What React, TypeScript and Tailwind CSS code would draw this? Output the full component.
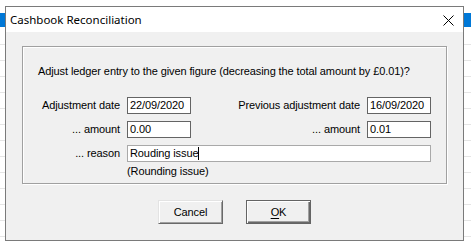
const rows = Array.from({ length: 13 });

function Edit({ value, width, light, caret }: { value: string; width: string; light?: boolean; caret?: boolean }) {
  return (
    <div
      className={`flex h-[17px] items-center bg-white pl-[2px] ${width} border ${
        light ? "border-[#a9a9a9]" : "border-[#646464]"
      }`}
    >
      <span>{value}</span>
      {caret && <span className="h-[13px] w-px bg-black" />}
    </div>
  );
}

export default function App() {
  return (
    <div className="relative h-[246px] w-[471px] overflow-hidden bg-white">
      {/* list behind the dialog */}
      <div className="flex flex-col">
        <div className="h-[13px]" />
        <div className="h-[14px] bg-[#0078d7]" />
        <div className="h-[17px]" />
        {rows.map((_, i) => (
          <div key={i} className="h-[16px] border-t border-[#e5e5e5]" />
        ))}
      </div>

      {/* dialog window */}
      <div
        className="absolute left-[5px] top-[6px] flex h-[235px] w-[459px] flex-col border border-[#7a7a7a] bg-[#f0f0f0] text-[11px] tracking-[-0.1px] text-black"
        style={{ fontFamily: '"Liberation Sans", Arial, sans-serif' }}
      >
        <div className="flex h-[25px] items-center justify-between bg-white pl-[4px] pr-[9px]">
          <span className="text-[11.5px] tracking-normal" style={{ fontFamily: '"Noto Sans", sans-serif' }}>
            Cashbook Reconciliation
          </span>
          <svg width="11" height="11" viewBox="0 0 11 11" className="mt-[1px]">
            <path d="M0.5 0.5 L10.5 10.5 M10.5 0.5 L0.5 10.5" stroke="#000" strokeWidth="1" />
          </svg>
        </div>

        <div className="flex flex-1 flex-col px-[16px] pt-[14px]">
          <div className="flex h-[138px] flex-col border border-[#a0a0a0] pl-[15px] pr-[15px] pt-[18px] shadow-[inset_1px_1px_0_#fff,1px_1px_0_#fff]">
            <div className="leading-[13px]">
              Adjust ledger entry to the given figure (decreasing the total amount by £0.01)?
            </div>

            <div className="mt-[19px] flex flex-col gap-[7px]">
              <div className="flex items-center">
                <div className="w-[82px] text-right">Adjustment date</div>
                <div className="ml-[7px]">
                  <Edit value="22/09/2020" width="w-[64px]" />
                </div>
                <div className="flex-1 text-right">Previous adjustment date</div>
                <div className="ml-[7px]">
                  <Edit value="16/09/2020" width="w-[64px]" />
                </div>
              </div>
              <div className="flex items-center">
                <div className="w-[82px] text-right">... amount</div>
                <div className="ml-[7px]">
                  <Edit value="0.00" width="w-[64px]" />
                </div>
                <div className="flex-1 text-right">... amount</div>
                <div className="ml-[7px]">
                  <Edit value="0.01" width="w-[64px]" />
                </div>
              </div>
              <div className="flex items-center">
                <div className="w-[82px] text-right">... reason</div>
                <div className="ml-[7px] flex-1">
                  <Edit value="Rouding issue" width="w-full" light caret />
                </div>
              </div>
            </div>

            <div className="mt-[3px] pl-[89px] leading-[13px]">(Rounding issue)</div>
          </div>

          <div className="mt-[16px] flex justify-center gap-[23px]">
            <button className="flex h-[24px] w-[65px] items-center justify-center border border-b-[#696969] border-l-[#e3e3e3] border-r-[#696969] border-t-[#e3e3e3] bg-[#f0f0f0] shadow-[inset_1px_1px_0_#fff,inset_-1px_-1px_0_#a0a0a0]">
              Cancel
            </button>
            <button className="flex h-[24px] w-[65px] items-center justify-center border border-[#646464] bg-[#f0f0f0] shadow-[inset_1px_1px_0_#fff,inset_-1px_-1px_0_#696969,inset_-2px_-2px_0_#a0a0a0]">
              <span>
                <span className="underline underline-offset-2">O</span>K
              </span>
            </button>
          </div>
        </div>
      </div>
    </div>
  );
}
